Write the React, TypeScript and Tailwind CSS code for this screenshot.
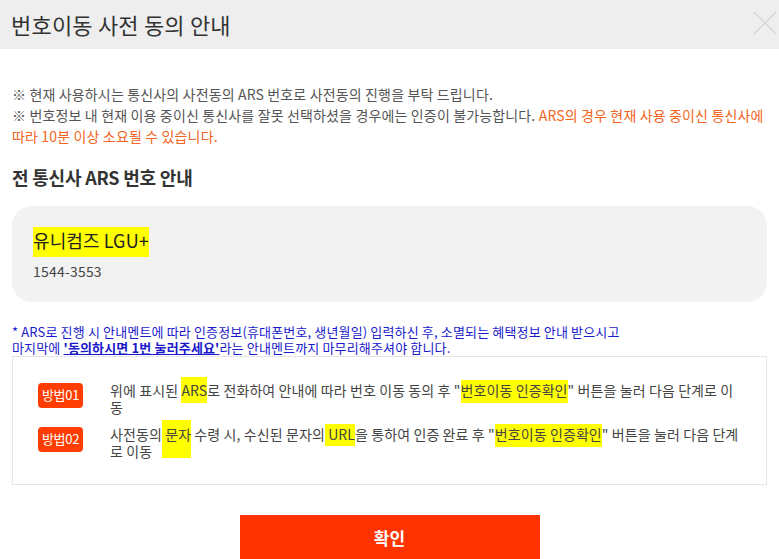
import React from "react";

const font = { fontFamily: '"Noto Sans CJK KR", "Noto Sans", sans-serif' };

const Mark = ({ children, className = "" }: { children: React.ReactNode; className?: string }) => (
  <span className={`bg-[#ffff00] ${className}`}>{children}</span>
);

const methods = [
  {
    label: "방법01",
    body: (
      <>
        위에 표시된 <Mark className="pt-[3px] pb-[3px]">ARS</Mark>로 전화하여 안내에 따라 번호 이동 동의 후 "
        <Mark className="pb-[3px]">번호이동 인증확인</Mark>" 버튼을 눌러 다음 단계로 이동
      </>
    ),
  },
  {
    label: "방법02",
    body: (
      <>
        사전동의<Mark className="pt-[4px] pb-[14px]"> 문자</Mark> 수령 시, 수신된 문자의<Mark className="pb-[2px]"> URL</Mark>을 통하여 인증 완료 후 "
        <Mark className="pb-[3px]">번호이동 인증확인</Mark>" 버튼을 눌러 다음 단계로 이동
      </>
    ),
  },
];

const ArsGuide = () => {
  return (
    <div className="w-[779px] h-[559px] overflow-hidden bg-white text-[#444]" style={font}>
      <header className="flex h-[49px] items-center justify-between bg-[#eeeeee] pl-[11px] pr-[2px]">
        <h1 className="text-[22px] tracking-[0.2px] text-[#333]">번호이동 사전 동의 안내</h1>
        <svg width="24" height="24" viewBox="0 0 24 24" className="mb-[4px]">
          <path d="M1 1L23 23M23 1L1 23" stroke="#d4d4d4" strokeWidth="1.2" />
        </svg>
      </header>

      <div className="px-[12px] pt-[35px]">
        <div className="whitespace-nowrap text-[14px] leading-[21px] tracking-[0.15px] text-[#555]">
          <p>※ 현재 사용하시는 통신사의 사전동의 ARS 번호로 사전동의 진행을 부탁 드립니다.</p>
          <p>
            ※ 번호정보 내 현재 이용 중이신 통신사를 잘못 선택하셨을 경우에는 인증이 불가능합니다.{" "}
            <span className="text-[#f26522]">
              ARS의 경우 현재 사용 중이신 통신사에
              <br />
              따라 10분 이상 소요될 수 있습니다.
            </span>
          </p>
        </div>

        <h2 className="mt-[17px] text-[18px] font-bold tracking-[-0.2px] text-[#333]">전 통신사 ARS 번호 안내</h2>

        <div className="mt-[15px] flex h-[96px] flex-col justify-center rounded-[20px] bg-[#f2f2f2] pl-[21px]">
          <p className="mt-[2px] text-[18px] leading-[23px] tracking-[0.1px] text-[#222]">
            <Mark className="pb-[4px]">유니컴즈 LGU+</Mark>
          </p>
          <p className="mt-[9px] text-[14px] tracking-[0.2px] text-[#444]">1544-3553</p>
        </div>

        <p className="mt-[22px] text-[13px] leading-[16px] tracking-[0.15px] text-[#1a1acc]">
          * ARS로 진행 시 안내멘트에 따라 인증정보(휴대폰번호, 생년월일) 입력하신 후, 소멸되는 혜택정보 안내 받으시고
          <br />
          마지막에 <b className="underline">'동의하시면 1번 눌러주세요'</b>라는 안내멘트까지 마무리해주셔야 합니다.
        </p>

        <div className="flex h-[129px] flex-col justify-center gap-[10px] border border-[#e5e5e5] pl-[25px] pr-[25px]">
          {methods.map((m) => (
            <div key={m.label} className="flex items-start">
              <span className="mt-[1px] flex h-[25px] w-[45px] shrink-0 items-center justify-center rounded-[4px] bg-[#ff3d00] text-[13px] tracking-[-0.3px] text-white">
                {m.label}
              </span>
              <p className="ml-[27px] text-[14px] leading-[17px] tracking-[0.1px] text-[#444]">{m.body}</p>
            </div>
          ))}
        </div>

        <div className="mt-[30px] flex justify-center">
          <button className="h-[45px] w-[300px] bg-[#ff3300] text-[17px] font-bold text-white">확인</button>
        </div>
      </div>
    </div>
  );
};

export default ArsGuide;
